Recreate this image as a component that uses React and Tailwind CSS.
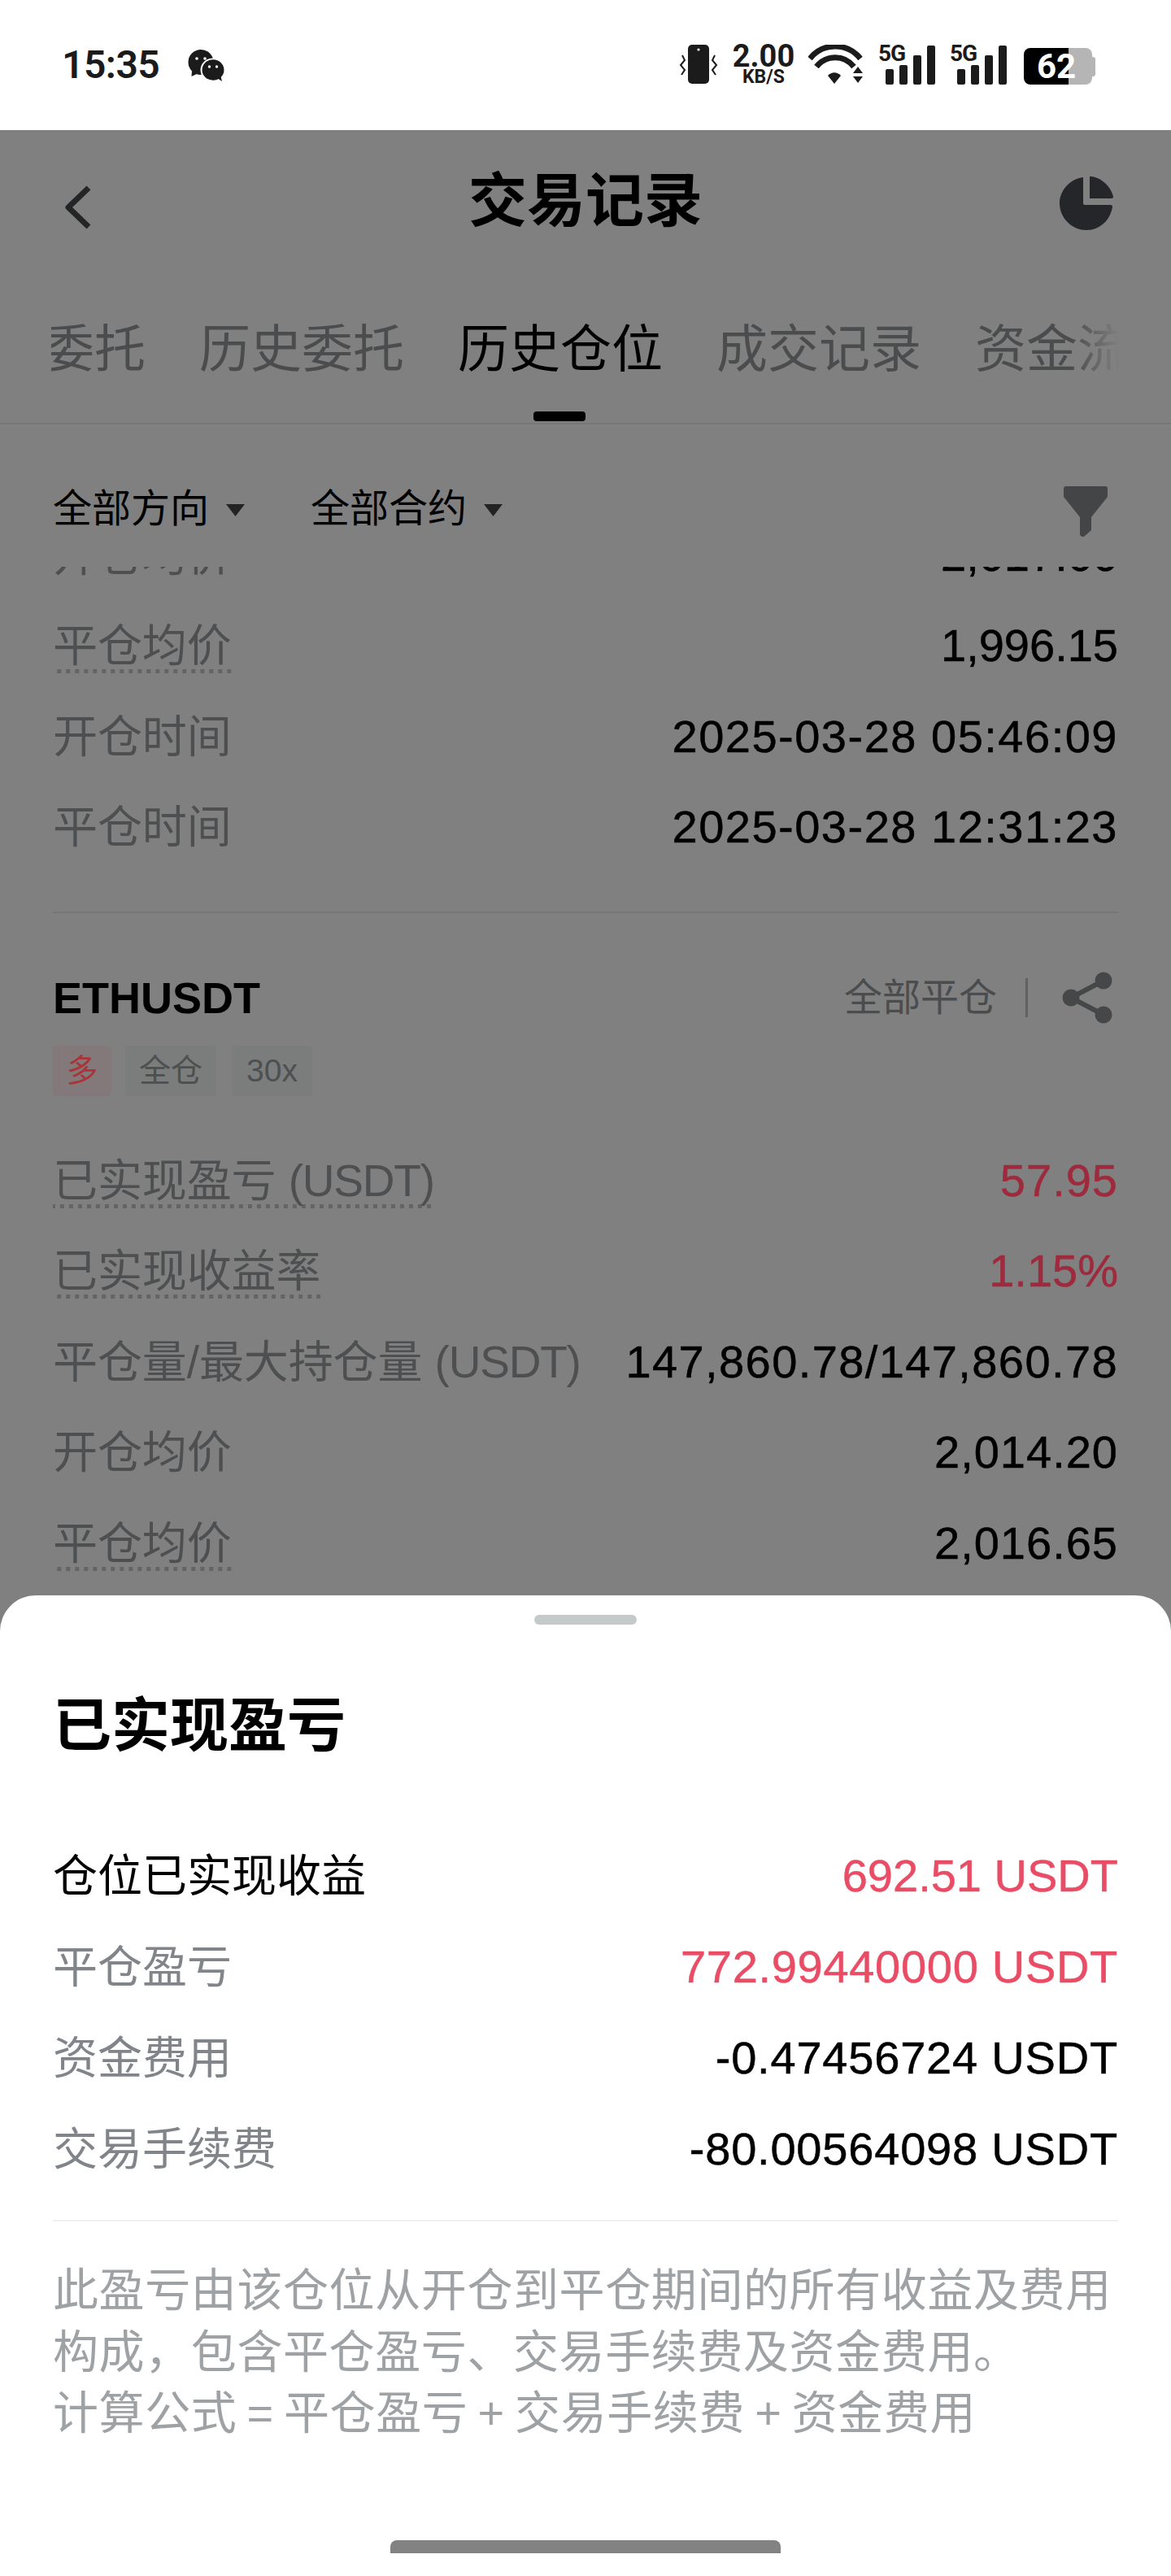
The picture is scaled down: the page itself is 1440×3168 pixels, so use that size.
import React from "react";

const FONT = { fontFamily: '"Liberation Sans","Noto Sans CJK SC",sans-serif' };

function WeChat() {
  return (
    <svg width="46" height="40" viewBox="0 0 46 40" className="ml-[35px] mt-[6px]">
      <ellipse cx="16" cy="15.5" rx="15.5" ry="15.5" fill="#1b1b1b" />
      <path d="M5 26 L4.5 33 L13 29 Z" fill="#1b1b1b" />
      <circle cx="11" cy="11" r="1.8" fill="#fff" />
      <circle cx="21" cy="11" r="1.8" fill="#fff" />
      <ellipse cx="31" cy="25" rx="15.5" ry="14.5" fill="#fff" />
      <ellipse cx="31" cy="25" rx="13.5" ry="12.8" fill="#1b1b1b" />
      <path d="M36 35 L42 39 L40 31 Z" fill="#1b1b1b" />
      <circle cx="26.5" cy="21" r="1.7" fill="#fff" />
      <circle cx="35.5" cy="21" r="1.7" fill="#fff" />
    </svg>
  );
}

function Vibrate() {
  return (
    <svg width="48" height="48" viewBox="0 0 48 48">
      <rect x="11" y="0" width="26" height="48" rx="5" fill="#1b1b1b" />
      <circle cx="24" cy="6" r="1.6" fill="#fff" />
      <path d="M4 13 L7 19 L2 25 L7 31 L3 37" fill="none" stroke="#1b1b1b" strokeWidth="2" />
      <path d="M44 13 L41 19 L46 25 L41 31 L45 37" fill="none" stroke="#1b1b1b" strokeWidth="2" />
    </svg>
  );
}

function Wifi() {
  return (
    <svg width="68" height="48" viewBox="0 0 68 48">
      <path d="M2 17 C18 -3 48 -3 64 17" fill="none" stroke="#1b1b1b" strokeWidth="7" />
      <path d="M10 27 C22 12 44 12 56 27" fill="none" stroke="#1b1b1b" strokeWidth="7" />
      <path d="M24 38 L32 48 L40 38 C35 33 29 33 24 38 Z" fill="#1b1b1b" />
      <path d="M61 27 L67 35 L55 35 Z" fill="#1b1b1b" />
      <path d="M55 39 L67 39 L61 47 Z" fill="#1b1b1b" />
    </svg>
  );
}

function Signal() {
  return (
    <div className="relative h-[49px] w-[69px]">
      <span className="absolute left-0 top-[-2px] text-[28px] font-bold leading-[25px] text-[#1b1b1b] [font-family:Roboto] tracking-[-1px]">5G</span>
      <div className="absolute bottom-0 left-[9px] flex items-end gap-[7px]">
        <div className="h-[19px] w-[10px] rounded-[2px] bg-[#1b1b1b]" />
        <div className="h-[24px] w-[10px] rounded-[2px] bg-[#1b1b1b]" />
        <div className="h-[36px] w-[10px] rounded-[2px] bg-[#1b1b1b]" />
        <div className="h-[48px] w-[10px] rounded-[2px] bg-[#1b1b1b]" />
      </div>
    </div>
  );
}

function Battery() {
  return (
    <div className="relative flex h-[45px] w-[88px] items-center">
      <div className="h-[45px] w-[55px] rounded-l-[8px] bg-black" />
      <div className="h-[45px] w-[29px] rounded-r-[8px] bg-[#b5b5b5]" />
      <div className="h-[24px] w-[4px] rounded-r-[3px] bg-[#b5b5b5]" />
      <span className="absolute left-[16px] top-[3px] text-[42px] font-bold leading-[40px] text-white [font-family:Roboto]">62</span>
    </div>
  );
}

function StatusBar() {
  return (
    <div className="flex h-[160px] shrink-0 items-start justify-between bg-white pl-[76px] pr-[93px] pt-[55px]">
      <div className="flex items-start">
        <span className="text-[48px] font-semibold leading-[50px] tracking-[-0.5px] text-[#1b1b1b] [font-family:Roboto]">15:35</span>
        <WeChat />
      </div>
      <div className="flex items-start">
        <Vibrate />
        <div className="ml-[17px] flex w-[78px] flex-col items-center">
          <span className="text-[38px] font-bold leading-[29px] text-[#1b1b1b] [font-family:Roboto]">2.00</span>
          <span className="mt-[1px] text-[23px] font-bold leading-[20px] text-[#1b1b1b] [font-family:Roboto]">KB/S</span>
        </div>
        <div className="ml-[16px]"><Wifi /></div>
        <div className="ml-[18px]"><Signal /></div>
        <div className="ml-[19px]"><Signal /></div>
        <div className="ml-[22px] mt-[4px]"><Battery /></div>
      </div>
    </div>
  );
}

function Nav() {
  return (
    <div className="relative flex h-[210px] shrink-0 items-start justify-center pt-[47px]">
      <span className="text-[72px] font-bold leading-[80px] text-black">交易记录</span>
      <svg width="36" height="54" viewBox="0 0 36 54" className="absolute left-[78px] top-[68px]">
        <path d="M31 3 L6 27 L31 51" fill="none" stroke="#242526" strokeWidth="7" strokeLinejoin="round" />
      </svg>
      <svg width="66" height="66" viewBox="0 0 66 66" className="absolute left-[1303px] top-[57px]">
        <path d="M29 1 C13 3 0 17 0 33 C0 51 15 66 33 66 C50 66 63 53 65 37 C65 36 64 35 63 35 L31 35 C30 35 29 34 29 33 Z" fill="#242629" />
        <path d="M37 0 L37 27 L64 27 C65 27 66 26 66 25 C63 12 51 1 38 0 Z" fill="#242629" />
      </svg>
    </div>
  );
}

function Tabs() {
  return (
    <div className="relative h-[152px] shrink-0 border-b-2 border-[#767676]">
      <div className="relative mx-[63px] h-[150px] overflow-hidden pt-[17px]">
        <div className="flex w-[1500px] gap-[66px] -ml-[10px] text-[63px] leading-[84px] text-[#4a4c4d]">
          <span>委托</span>
          <span>历史委托</span>
          <span className="text-black">历史仓位</span>
          <span>成交记录</span>
          <span>资金流水</span>
        </div>
        <div className="absolute bottom-0 right-0 top-0 w-[60px] bg-gradient-to-r from-transparent to-[#808080]" />
      </div>
      <div className="absolute bottom-[2px] left-[656px] h-[12px] w-[64px] rounded-[4px] bg-black" />
    </div>
  );
}

function Caret() {
  return (
    <svg width="23" height="15" viewBox="0 0 23 15" className="ml-[21px] mt-[2px]">
      <path d="M0 0 L23 0 L11.5 15 Z" fill="#222324" />
    </svg>
  );
}

function Filters() {
  return (
    <div className="flex h-[175px] shrink-0 items-start justify-between pl-[65px] pr-[78px] pt-[71px]">
      <div className="flex items-center text-[48px] leading-[66px] text-black">
        <span>全部方向</span>
        <Caret />
        <span className="ml-[81px]">全部合约</span>
        <Caret />
      </div>
      <svg width="54" height="62" viewBox="0 0 54 62" className="mt-[5px]">
        <path d="M3 0 L51 0 C53 0 54 1 54 3 L54 13 L34 38 L34 54 L25 62 C21 62 20 61 20 58 L20 38 L0 13 L0 3 C0 1 1 0 3 0 Z" fill="#434546" />
      </svg>
    </div>
  );
}

function Dotted({ children }) {
  return (
    <span className="bg-[linear-gradient(to_right,#646464_50%,transparent_50%)] bg-[length:11px_5px] bg-bottom bg-repeat-x pb-[3px]">{children}</span>
  );
}

function Row({ label, value, dotted, valueClass = "text-black", tracking = "" }) {
  return (
    <div className="flex h-[111.5px] items-center justify-between text-[55px] leading-[72px]">
      <span className="tracking-[-0.1px] text-[#4d4f50]">{dotted ? <Dotted>{label}</Dotted> : label}</span>
      <span className={`text-[56px] [-webkit-text-stroke:0.5px] ${valueClass} ${tracking}`}>{value}</span>
    </div>
  );
}

function Tag({ children, red, w }) {
  return (
    <span className={`flex h-[62px] items-center justify-center rounded-[4px] text-[39px] ${w} ${red ? "bg-[#84797a] text-[#a8353a]" : "bg-[#7b7d7d] text-[#4d4f50]"}`}>
      {children}
    </span>
  );
}

function List() {
  return (
    <div className="flex-1 overflow-hidden px-[65px]">
      <div className="-mt-[70px]">
        <Row label="开仓均价" value="2,017.00" />
        <Row label="平仓均价" value="1,996.15" dotted />
        <Row label="开仓时间" value="2025-03-28 05:46:09" tracking="tracking-[1.5px]" />
        <Row label="平仓时间" value="2025-03-28 12:31:23" tracking="tracking-[1.5px]" />
        <div className="mt-[48px] border-t-2 border-[#767676] pt-[74px]">
          <div className="flex h-[60px] items-center justify-between">
            <span className="text-[54px] font-bold leading-[60px] text-black">ETHUSDT</span>
            <div className="flex items-center">
              <span className="text-[47px] leading-[60px] text-[#4a4c4d]">全部平仓</span>
              <div className="ml-[35px] h-[48px] w-[3px] bg-[#606162]" />
              <svg width="62" height="64" viewBox="0 0 62 64" className="ml-[42px] mr-[7px]">
                <path d="M51 11 L11 32 L51 53" fill="none" stroke="#454748" strokeWidth="6" />
                <circle cx="51" cy="11" r="10.5" fill="#454748" />
                <circle cx="11" cy="32" r="10.5" fill="#454748" />
                <circle cx="51" cy="53" r="10.5" fill="#454748" />
              </svg>
            </div>
          </div>
          <div className="mt-[29px] flex gap-[17px]">
            <Tag red w="w-[72px]">多</Tag>
            <Tag w="w-[112px]">全仓</Tag>
            <Tag w="w-[99px] ml-[2px]">30x</Tag>
          </div>
        </div>
        <div className="mt-[48px]">
          <Row label={<>已实现盈亏 <span className="tracking-[-1.2px]">(USDT)</span></>} value="57.95" dotted valueClass="text-[#9d2b3d]" tracking="tracking-[1px]" />
          <Row label="已实现收益率" value="1.15%" dotted valueClass="text-[#9d2b3d]" />
          <Row label={<>平仓量/最大持仓量 <span className="tracking-[-1.2px]">(USDT)</span></>} value="147,860.78/147,860.78" tracking="tracking-[1.4px]" />
          <Row label="开仓均价" value="2,014.20" tracking="tracking-[1px]" />
          <Row label="平仓均价" value="2,016.65" dotted tracking="tracking-[1px]" />
        </div>
      </div>
    </div>
  );
}

function SheetRow({ label, value, strong, red, tracking = "" }) {
  return (
    <div className="flex h-[112px] items-center justify-between text-[55px] leading-[72px]">
      <span className={strong ? "text-black" : "text-[#81858a]"}>{label}</span>
      <span className={`text-[56px] [-webkit-text-stroke:0.5px] ${red ? "text-[#e94d66]" : "text-black"} ${tracking}`}>{value}</span>
    </div>
  );
}

function Sheet() {
  return (
    <div className="absolute inset-x-0 bottom-0 flex h-[1206px] flex-col rounded-t-[44px] bg-white px-[65px]">
      <div className="mx-auto mt-[24px] h-[12px] w-[126px] rounded-full bg-[#c6c9ca]" />
      <div className="mt-[74px] text-[72px] font-bold leading-[100px] text-black">已实现盈亏</div>
      <div className="mt-[79px]">
        <SheetRow label="仓位已实现收益" value="692.51 USDT" strong red />
        <SheetRow label="平仓盈亏" value="772.99440000 USDT" red tracking="tracking-[0.7px]" />
        <SheetRow label="资金费用" value="-0.47456724 USDT" tracking="tracking-[0.8px]" />
        <SheetRow label="交易手续费" value="-80.00564098 USDT" tracking="tracking-[0.8px]" />
      </div>
      <div className="mt-[31px] h-[2px] bg-[#f0f0f0]" />
      <div className="mt-[47px] whitespace-nowrap text-[56px] leading-[75.5px] tracking-[0.6px] text-[#9ea2a5]">
        <div>此盈亏由该仓位从开仓到平仓期间的所有收益及费用</div>
        <div>构成，包含平仓盈亏、交易手续费及资金费用。</div>
        <div className="[word-spacing:-4px]">计算公式 = 平仓盈亏 + 交易手续费 + 资金费用</div>
      </div>
      <div className="absolute bottom-[28px] left-[480px] h-[16px] w-[480px] rounded-t-[8px] bg-[#828282]" />
    </div>
  );
}

export default function App() {
  return (
    <div style={FONT} className="relative flex h-[3168px] w-[1440px] flex-col overflow-hidden bg-[#808080]">
      <StatusBar />
      <Nav />
      <Tabs />
      <Filters />
      <List />
      <Sheet />
    </div>
  );
}
